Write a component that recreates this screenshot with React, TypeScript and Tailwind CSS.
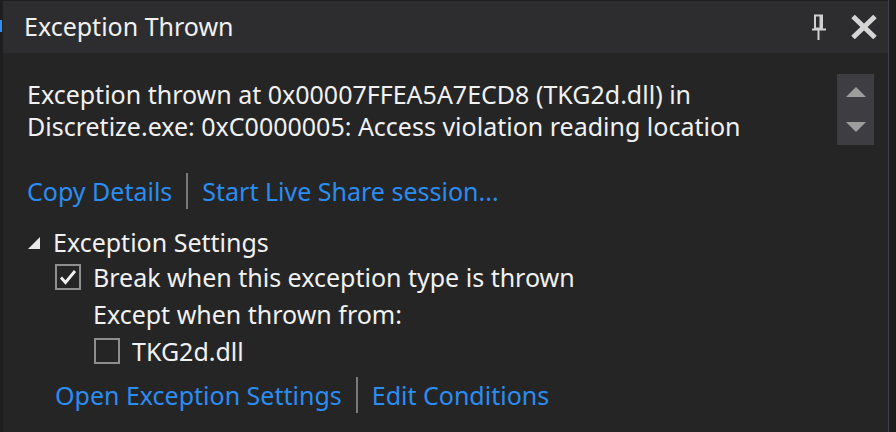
import React from "react";

const font = { fontFamily: '"Noto Sans", "Open Sans", sans-serif' };

function PinIcon() {
  return (
    <svg width="16" height="26" viewBox="0 0 16 26" fill="none">
      <path d="M4 1.5h7v13H4z" stroke="#d0d0d0" strokeWidth="2" />
      <path d="M9.5 2v12" stroke="#d0d0d0" strokeWidth="2" />
      <path d="M1 15.5h14" stroke="#d0d0d0" strokeWidth="2" />
      <path d="M7.5 16v10" stroke="#d0d0d0" strokeWidth="2" />
    </svg>
  );
}

function CloseIcon() {
  return (
    <svg width="28" height="24" viewBox="0 0 28 24">
      <path d="M3 1.5l22 21M25 1.5L3 22.5" stroke="#d4d4d4" strokeWidth="5" />
    </svg>
  );
}

function Checkbox({ checked }: { checked?: boolean }) {
  return (
    <div className="w-[26px] h-[26px] border-2 border-[#8e8e8e] flex items-center justify-center shrink-0">
      {checked && (
        <svg width="18" height="16" viewBox="0 0 18 16">
          <path d="M2 8.5l4.5 5L16 2" stroke="#f1f1f1" strokeWidth="2.8" fill="none" />
        </svg>
      )}
    </div>
  );
}

function Sep() {
  return <div className="w-[2px] h-[36px] bg-[#7a7a7a] mx-[14px]" />;
}

export default function App() {
  return (
    <div className="w-[896px] h-[432px] bg-[#1e1e1e] overflow-hidden relative text-[25px]" style={font}>
      <div className="absolute left-0 top-[20px] w-[2px] h-[12px] bg-[#2f8ff5]" />
      <div className="ml-[3px] w-[886px] h-[432px] border-r border-[#3f3f46] bg-[#252526] flex flex-col">
        <div className="h-[53px] shrink-0 bg-[#2d2d30] border-t border-[#1e1e1e] flex items-center pl-[21px] pr-[10px]">
          <div className="text-[#f1f1f1] leading-[32px] mt-[-2px]">Exception Thrown</div>
          <div className="ml-auto flex items-center gap-[23px] mt-[-1px]">
            <PinIcon />
            <CloseIcon />
          </div>
        </div>
        <div className="flex pl-[24px] pr-[14px] pt-[25px]">
          <div className="leading-[32px] text-[#f1f1f1] flex-1">
            <div>Exception thrown at 0x00007FFEA5A7ECD8 (TKG2d.dll) in</div>
            <div>Discretize.exe: 0xC0000005: Access violation reading location</div>
          </div>
          <div className="w-[37px] h-[71px] bg-[#3e3e42] flex flex-col items-center justify-between py-[13px] mt-[-4px]">
            <svg width="20" height="10" viewBox="0 0 20 10">
              <path d="M10 0L20 10H0z" fill="#9e9e9e" />
            </svg>
            <svg width="20" height="10" viewBox="0 0 20 10">
              <path d="M0 0h20L10 10z" fill="#9e9e9e" />
            </svg>
          </div>
        </div>
        <div className="flex items-center h-[36px] leading-[36px] pl-[24px] mt-[28px] text-[#2a8df2]">
          <span>Copy Details</span>
          <Sep />
          <span>Start Live Share session...</span>
        </div>
        <div className="flex items-center h-[32px] leading-[32px] pl-[25px] mt-[17px] text-[#f1f1f1]">
          <svg width="12" height="12" viewBox="0 0 12 12" className="mr-[13px] mt-[1px]">
            <path d="M12 0V12H0z" fill="#e8e8e8" />
          </svg>
          <span>Exception Settings</span>
        </div>
        <div className="pl-[52px] mt-[3px] text-[#f1f1f1] leading-[32px] flex flex-col gap-[5px]">
          <div className="flex items-center gap-[12px] h-[32px]">
            <Checkbox checked />
            <span>Break when this exception type is thrown</span>
          </div>
          <div className="pl-[38px] h-[32px]">Except when thrown from:</div>
          <div className="pl-[39px] flex items-center gap-[12px] h-[32px]">
            <Checkbox />
            <span>TKG2d.dll</span>
          </div>
          <div className="flex items-center h-[36px] leading-[36px] mt-[5px] text-[#2a8df2]">
            <span>Open Exception Settings</span>
            <Sep />
            <span>Edit Conditions</span>
          </div>
        </div>
      </div>
    </div>
  );
}
